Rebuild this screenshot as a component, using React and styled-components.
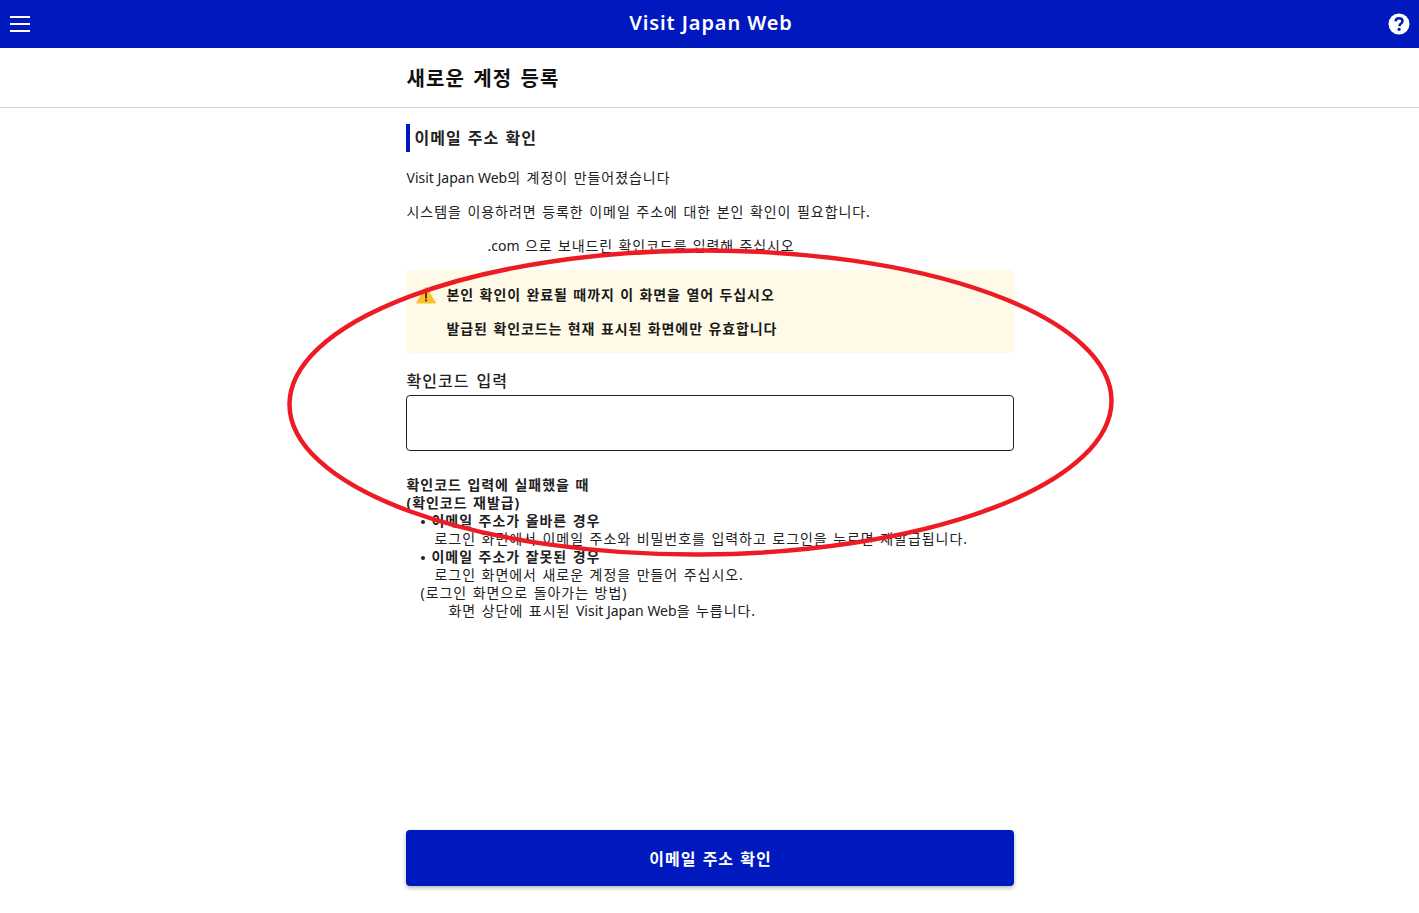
import React from 'react';
import styled, { createGlobalStyle } from 'styled-components';

const Global = createGlobalStyle`
  html, body { margin: 0; padding: 0; background: #fff; }
  body {
    font-family: "Noto Sans", "Noto Sans CJK KR", sans-serif;
    font-size: 14px;
    color: #212121;
    letter-spacing: 0.95px;
    word-spacing: 1px;
  }
`;

const Page = styled.div`
  position: relative;
  width: 1419px;
  height: 913px;
  overflow: hidden;
  display: flex;
  flex-direction: column;
`;

const Header = styled.header`
  height: 48px;
  flex: none;
  background: #0019bf;
  display: grid;
  grid-template-columns: 1fr auto 1fr;
  align-items: center;
  padding: 0 9px 0 10px;
  color: #fff;
`;

const BrandTitle = styled.div`
  margin: 0 0 3px 2px;
  font-size: 20px;
  font-weight: 600;
  letter-spacing: 0.9px;
  word-spacing: 0;
`;

const MenuIcon = styled.div`
  width: 20px;
  display: flex;
  flex-direction: column;
  gap: 5px;
  span { display: block; height: 2px; background: #fff; }
`;

const HelpIcon = styled.svg`
  justify-self: end;
`;

const Latin = styled.span`
  letter-spacing: 0;
  word-spacing: 0;
`;

const TitleBar = styled.div`
  height: 59px;
  flex: none;
  border-bottom: 1px solid #d2d2d2;
  display: flex;
  align-items: center;
  justify-content: center;
`;

const Column = styled.div`
  width: 608px;
`;

const PageTitle = styled.h1`
  margin: 0 0 0 1px;
  font-size: 20px;
  font-weight: 700;
  letter-spacing: 1.1px;
  word-spacing: 2px;
  color: #111;
`;

const Content = styled(Column)`
  margin: 16px auto 0;
  flex: 1;
  display: flex;
  flex-direction: column;
`;

const SectionTitle = styled.h2`
  margin: 0 0 16px;
  height: 28px;
  border-left: 4px solid #0019bf;
  padding-left: 5px;
  font-size: 16px;
  line-height: 29px;
  font-weight: 700;
  letter-spacing: 1px;
  word-spacing: 1px;
  color: #222;
`;

const Para = styled.p`
  margin: 0 0 14px;
  padding-left: 1px;
  height: 20px;
  font-size: 14px;
  line-height: 20px;
`;

const Indented = styled(Para)`
  padding-left: 82px;
  margin-bottom: 14px;
  letter-spacing: 0.87px;
`;

const Notice = styled.div`
  background: #fffae8;
  border-radius: 4px;
  padding: 15px 10px 14px;
  display: grid;
  grid-template-columns: 20px 1fr;
  column-gap: 11px;
  row-gap: 14px;
  font-size: 14px;
  line-height: 20px;
  font-weight: 700;
  letter-spacing: 0.9px;
  color: #1a1a1a;
`;

const NoticeLine = styled.div`
  grid-column: 2;
`;

const WarnIcon = styled.svg`
  width: 20px;
  height: 18px;
  align-self: center;
`;

const FieldLabel = styled.label`
  display: block;
  margin-top: 17px;
  padding-left: 1px;
  height: 25px;
  font-size: 16px;
  line-height: 22px;
  font-weight: 500;
  letter-spacing: 1px;
  word-spacing: 2px;
`;

const CodeInput = styled.input`
  display: block;
  box-sizing: border-box;
  width: 100%;
  height: 56px;
  border: 1px solid #212121;
  border-radius: 4px;
  background: #fff;
  outline: none;
`;

const HelpBlock = styled.div`
  margin-top: 25px;
  padding-left: 1px;
  font-size: 14px;
  line-height: 18px;
`;

const HelpHead = styled.div`
  font-weight: 700;
`;

const HelpCase = styled.div`
  position: relative;
  padding-left: 25px;
  font-weight: 700;
  &::before {
    content: "";
    position: absolute;
    left: 14px;
    top: 8px;
    width: 4px;
    height: 4px;
    border-radius: 50%;
    background: #212121;
  }
`;

const HelpText = styled.div`
  padding-left: ${(p) => p.$indent}px;
`;

const Footer = styled(Column)`
  margin: 0 auto 27px;
`;

const SubmitButton = styled.button`
  display: block;
  width: 100%;
  height: 56px;
  border: 0;
  border-radius: 4px;
  padding: 0 0 0 2px;
  background: #0019bf;
  color: #fff;
  font: 700 16px "Noto Sans", "Noto Sans CJK KR", sans-serif;
  letter-spacing: 1px;
  word-spacing: 1px;
  box-shadow: 0 2px 4px rgba(0, 0, 0, 0.3);
`;

const Scribble = styled.svg`
  position: absolute;
  left: 0;
  top: 0;
  pointer-events: none;
`;

export default function App() {
  return (
    <Page>
      <Global />
      <Header>
        <MenuIcon>
          <span />
          <span />
          <span />
        </MenuIcon>
        <BrandTitle>Visit Japan Web</BrandTitle>
        <HelpIcon width="22" height="22" viewBox="0 0 22 22">
          <circle cx="11" cy="11" r="10.5" fill="#fff" />
          <path
            d="M7.6 8.4c.1-2 1.500-3.200 3.500-3.200s3.400 1.200 3.400 2.900c0 1.300-.7 2-1.700 2.700-.9.600-1.200 1-1.200 2v.4"
            fill="none"
            stroke="#0019bf"
            strokeWidth="2.500"
          />
          <circle cx="11.100" cy="16.300" r="1.600" fill="#0019bf" />
        </HelpIcon>
      </Header>

      <TitleBar>
        <Column>
          <PageTitle>새로운 계정 등록</PageTitle>
        </Column>
      </TitleBar>

      <Content>
        <SectionTitle>이메일 주소 확인</SectionTitle>
        <Para><Latin>Visit Japan Web</Latin>의 계정이 만들어졌습니다</Para>
        <Para>시스템을 이용하려면 등록한 이메일 주소에 대한 본인 확인이 필요합니다.</Para>
        <Indented><Latin>.com</Latin> 으로 보내드린 확인코드를 입력해 주십시오</Indented>

        <Notice>
          <WarnIcon viewBox="0 0 20 18">
            <path d="M10 1 L19.500 17 H0.500 Z" fill="#fbc02d" stroke="#fbc02d" strokeLinejoin="round" />
            <rect x="9.100" y="6" width="1.800" height="6.500" fill="#3a2c00" />
            <rect x="9.100" y="13.500" width="1.800" height="1.900" fill="#3a2c00" />
          </WarnIcon>
          <div>본인 확인이 완료될 때까지 이 화면을 열어 두십시오</div>
          <NoticeLine>발급된 확인코드는 현재 표시된 화면에만 유효합니다</NoticeLine>
        </Notice>

        <FieldLabel>확인코드 입력</FieldLabel>
        <CodeInput type="text" />

        <HelpBlock>
          <HelpHead>확인코드 입력에 실패했을 때</HelpHead>
          <HelpHead>(확인코드 재발급)</HelpHead>
          <HelpCase>이메일 주소가 올바른 경우</HelpCase>
          <HelpText $indent={28}>로그인 화면에서 이메일 주소와 비밀번호를 입력하고 로그인을 누르면 재발급됩니다.</HelpText>
          <HelpCase>이메일 주소가 잘못된 경우</HelpCase>
          <HelpText $indent={28}>로그인 화면에서 새로운 계정을 만들어 주십시오.</HelpText>
          <HelpText $indent={14}>(로그인 화면으로 돌아가는 방법)</HelpText>
          <HelpText $indent={42}>화면 상단에 표시된 <Latin>Visit Japan Web</Latin>을 누릅니다.</HelpText>
        </HelpBlock>
      </Content>

      <Footer>
        <SubmitButton>이메일 주소 확인</SubmitButton>
      </Footer>

      <Scribble width="1419" height="913" viewBox="0 0 1419 913">
        <ellipse cx="700.500" cy="402.500" rx="411" ry="152" fill="none" stroke="#ed1c24" strokeWidth="4.500" transform="rotate(-0.3 700.500 402.500)" />
      </Scribble>
    </Page>
  );
}
